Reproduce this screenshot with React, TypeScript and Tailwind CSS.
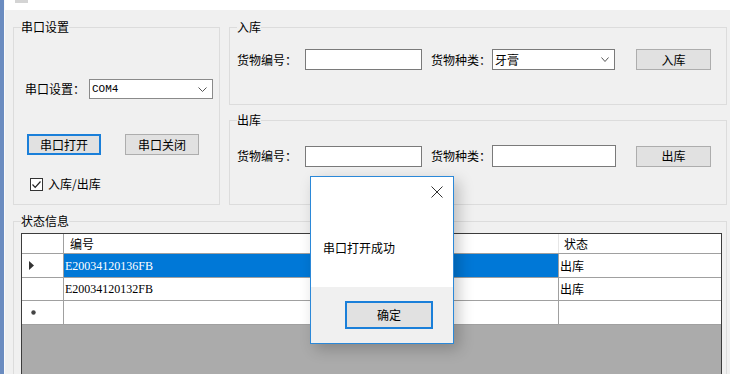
import React from 'react';

const ui = { fontFamily: '"Noto Sans CJK SC", "Microsoft YaHei", sans-serif' };
const mono = { fontFamily: '"Liberation Mono", "Noto Sans CJK SC", monospace' };
const serif = { fontFamily: '"Liberation Serif", "Noto Sans CJK SC", serif' };

const Chevron = ({ w = 9 }: { w?: number }) => (
    <svg width={w} height="5" viewBox={`0 0 ${w} 5`} className="shrink-0">
        <path d={`M0.5 0.5 L${w / 2} 4.5 L${w - 0.5} 0.5`} fill="none" stroke="#555" strokeWidth="1" />
    </svg>
);

const Group = ({ title, className, children }: { title: string; className: string; children: React.ReactNode }) => (
    <fieldset className={`shrink-0 border border-[#dcdcdc] px-0 pb-0 ${className}`}>
        <legend className="ml-[7px] px-0 text-[12px] leading-[16px] text-black">{title}</legend>
        {children}
    </fieldset>
);

const Btn = ({ label, focused, className = '' }: { label: string; focused?: boolean; className?: string }) => (
    <div
        className={`flex items-center justify-center bg-[#e1e1e1] text-[12px] leading-[16px] text-black ${
            focused ? 'border-2 border-[#1a7fd9]' : 'border border-[#adadad]'
        } ${className}`}
    >
        {label}
    </div>
);

const Input = ({ className = '' }: { className?: string }) => (
    <div className={`bg-white border border-[#7a7a7a] ${className}`} />
);

const App = () => {
    return (
        <div className="relative flex w-[730px] h-[374px] overflow-hidden bg-[#f0f0f0] text-black" style={ui}>
            <div className="w-[4px] shrink-0 bg-[#6b8cc0]" />
            <div className="w-[1px] shrink-0 bg-[#fafafa]" />
            <div className="flex flex-col flex-1 min-h-0">
                <div className="shrink-0 h-[10px] bg-white">
                    <div className="ml-[10px] w-[13px] h-[3px] bg-[#d4d4d4]" />
                </div>

                <div className="shrink-0 flex flex-col pl-[8px] pr-[3px] pt-[9px]">
                    <div className="flex gap-[9px]">
                        {/* 串口设置 */}
                        <Group title="串口设置" className="w-[207px] h-[186px]">
                            <div className="flex flex-col pl-[11px]">
                                <div className="flex items-center mt-[44px]">
                                    <span className="w-[64px] text-[12px] leading-[16px]">串口设置：</span>
                                    <div className="flex items-center justify-between w-[124px] h-[20px] bg-white border border-[#8a8a8a] pl-[2px] pr-[5px]">
                                        <span className="text-[11px] leading-[14px]" style={mono}>COM4</span>
                                        <Chevron />
                                    </div>
                                </div>
                                <div className="flex mt-[35px]">
                                    <Btn label="串口打开" focused className="ml-[2px] w-[74px] h-[21px]" />
                                    <Btn label="串口关闭" className="ml-[24px] w-[74px] h-[21px]" />
                                </div>
                                <div className="flex items-center mt-[21px]">
                                    <svg width="13" height="13" viewBox="0 0 13 13" className="ml-[5px]">
                                        <rect x="0.5" y="0.5" width="12" height="12" fill="#fff" stroke="#333" />
                                        <path d="M2.5 6.5 L5.2 9.3 L10.5 3.5" fill="none" stroke="#222" strokeWidth="1.2" />
                                    </svg>
                                    <span className="ml-[5px] text-[12px] leading-[16px]">入库/出库</span>
                                </div>
                            </div>
                        </Group>

                        <div className="flex flex-col w-[498px] gap-[7px]">
                            {/* 入库 */}
                            <Group title="入库" className="h-[86px]">
                                <div className="flex items-center pl-[7px] mt-[14px]">
                                    <span className="w-[68px] text-[12px] leading-[16px]">货物编号：</span>
                                    <Input className="w-[117px] h-[21px]" />
                                    <span className="ml-[9px] w-[61px] text-[12px] leading-[16px]">货物种类：</span>
                                    <div className="flex items-center justify-between w-[123px] h-[21px] bg-white border border-[#7a7a7a] pl-[2px] pr-[5px]">
                                        <span className="text-[12px] leading-[16px]">牙膏</span>
                                        <Chevron w={8} />
                                    </div>
                                    <Btn label="入库" className="ml-[21px] w-[75px] h-[21px]" />
                                </div>
                            </Group>

                            {/* 出库 */}
                            <Group title="出库" className="h-[93px]">
                                <div className="flex items-center pl-[7px] mt-[17px]">
                                    <span className="w-[68px] text-[12px] leading-[16px]">货物编号：</span>
                                    <Input className="w-[117px] h-[21px]" />
                                    <span className="ml-[9px] w-[61px] text-[12px] leading-[16px]">货物种类：</span>
                                    <Input className="w-[124px] h-[22px]" />
                                    <Btn label="出库" className="ml-[20px] w-[75px] h-[21px]" />
                                </div>
                            </Group>
                        </div>
                    </div>

                    {/* 状态信息 */}
                    <Group title="状态信息" className="mt-[8px] h-[200px]">
                        <div className="pl-[7px] pr-[4px] mt-[4px]">
                            <div className="flex flex-col h-[160px] border border-[#3c3c3c] bg-[#ababab]">
                                <div className="flex shrink-0 h-[20px] bg-white border-b border-[#a0a0a0] text-[12px] leading-[16px]">
                                    <div className="w-[42px] border-r border-[#a0a0a0]" />
                                    <div className="flex items-center w-[495px] pl-[6px] border-r border-[#e6e6e6]">编号</div>
                                    <div className="flex items-center flex-1 pl-[5px]">状态</div>
                                </div>
                                <div className="flex shrink-0 h-[24px] bg-white border-b border-[#a0a0a0] text-[12px]">
                                    <div className="flex items-center w-[42px] pl-[7px] border-r border-[#a0a0a0]">
                                        <svg width="5" height="9" viewBox="0 0 5 9">
                                            <path d="M0 0 L5 4.5 L0 9 Z" fill="#333" />
                                        </svg>
                                    </div>
                                    <div className="flex items-center w-[495px] pl-[1px] bg-[#0078d7] text-white border-r border-[#a0a0a0]">
                                        <span className="text-[12px] leading-[14px]" style={serif}>E20034120136FB</span>
                                    </div>
                                    <div className="flex items-center flex-1 pl-[1px] leading-[16px]">出库</div>
                                </div>
                                <div className="flex shrink-0 h-[23px] bg-white border-b border-[#a0a0a0] text-[12px]">
                                    <div className="w-[42px] border-r border-[#a0a0a0]" />
                                    <div className="flex items-center w-[495px] pl-[1px] border-r border-[#a0a0a0]">
                                        <span className="text-[12px] leading-[14px]" style={serif}>E20034120132FB</span>
                                    </div>
                                    <div className="flex items-center flex-1 pl-[1px] leading-[16px]">出库</div>
                                </div>
                                <div className="flex shrink-0 h-[24px] bg-white border-b border-[#a0a0a0]">
                                    <div className="flex items-center w-[42px] pl-[9px] border-r border-[#a0a0a0]">
                                        <svg width="5" height="5" viewBox="0 0 5 5">
                                            <circle cx="2.5" cy="2.5" r="2.2" fill="#444" />
                                        </svg>
                                    </div>
                                    <div className="w-[495px] border-r border-[#a0a0a0]" />
                                    <div className="flex-1" />
                                </div>
                            </div>
                        </div>
                    </Group>
                </div>
            </div>

            {/* message box */}
            <div className="absolute left-[310px] top-[176px] flex flex-col w-[144px] h-[168px] bg-white border border-[#2b88d8] shadow-[5px_5px_14px_rgba(0,0,0,0.22)]">
                <div className="flex flex-col h-[110px]">
                    <div className="flex justify-end pt-[9px] pr-[10px]">
                        <svg width="12" height="12" viewBox="0 0 12 12">
                            <path d="M0.5 0.5 L11.5 11.5 M11.5 0.5 L0.5 11.5" stroke="#333" strokeWidth="1" />
                        </svg>
                    </div>
                    <span className="mt-[42px] pl-[12px] text-[12px] leading-[16px]">串口打开成功</span>
                </div>
                <div className="flex-1 bg-[#f0f0f0] pt-[14px] pl-[34px]">
                    <Btn label="确定" focused className="w-[88px] h-[28px]" />
                </div>
            </div>
        </div>
    );
};

export default App;
